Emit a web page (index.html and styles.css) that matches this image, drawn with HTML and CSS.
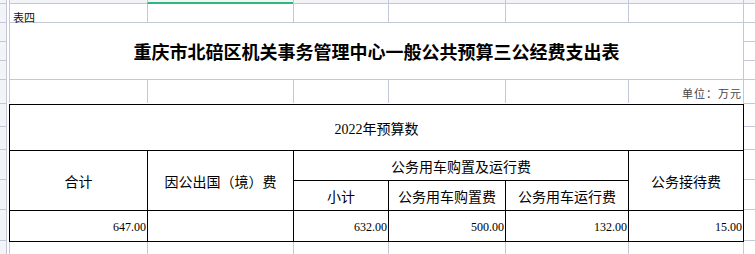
FILE: index.html
```html
<!DOCTYPE html>
<html lang="zh-CN">
<head>
<meta charset="utf-8">
<title>三公经费支出表</title>
<link rel="stylesheet" href="styles.css">
</head>
<body>
<div class="app">
  <div class="rowhdr">
    <div class="rh h3"></div>
    <div class="rh h18"></div>
    <div class="rh h18"></div>
    <div class="rh h18"></div>
    <div class="rh h18"></div>
    <div class="rh h23"></div>
    <div class="rh h22"></div>
    <div class="rh h22"></div>
    <div class="rh h29"></div>
    <div class="rh h29"></div>
    <div class="rh h30"></div>
    <div class="rh h20"></div>
  </div>
  <div class="sheet">
    <div class="grid7 colhdr">
      <div class="cell"></div><div class="cell sel"></div><div class="cell"></div><div class="cell"></div><div class="cell"></div><div class="cell"></div><div class="cell"></div>
    </div>
    <div class="grid7 r1">
      <div class="cell label">表四</div><div class="cell"></div><div class="cell"></div><div class="cell"></div><div class="cell"></div><div class="cell"></div><div class="cell"></div>
    </div>
    <div class="title-row">
      <div class="title">重庆市北碚区机关事务管理中心一般公共预算三公经费支出表</div>
      <div class="gcol">
        <div class="g h18"></div><div class="g h18"></div><div class="g h18"></div>
      </div>
    </div>
    <div class="grid7 unit-row">
      <div class="cell"></div><div class="cell"></div><div class="cell"></div><div class="cell"></div><div class="cell"></div><div class="cell unit">单位：万元</div><div class="cell gl"></div>
    </div>
    <div class="table-row">
      <div class="tbl">
        <div class="tc year">2022年预算数</div>
        <div class="tc hd total">合计</div>
        <div class="tc hd abroad">因公出国（境）费</div>
        <div class="tc hd car">公务用车购置及运行费</div>
        <div class="tc hd recep">公务接待费</div>
        <div class="tc hd">小计</div>
        <div class="tc hd">公务用车购置费</div>
        <div class="tc hd">公务用车运行费</div>
        <div class="tc num">647.00</div>
        <div class="tc num"></div>
        <div class="tc num">632.00</div>
        <div class="tc num">500.00</div>
        <div class="tc num">132.00</div>
        <div class="tc num">15.00</div>
      </div>
      <div class="gcol">
        <div class="g h22"></div><div class="g h22"></div><div class="g h29"></div><div class="g h29"></div><div class="g h30"></div>
      </div>
    </div>
    <div class="grid7 tail">
      <div class="cell"></div><div class="cell"></div><div class="cell"></div><div class="cell"></div><div class="cell"></div><div class="cell"></div><div class="cell"></div>
    </div>
  </div>
</div>
</body>
</html>
```

FILE: styles.css
```css
* { box-sizing: border-box; }
html, body {
  margin: 0;
  padding: 0;
  background: #ffffff;
  overflow: hidden;
}
body {
  width: 755px;
  height: 254px;
  font-family: "Liberation Serif", "Noto Sans CJK SC", serif;
  color: #000;
}
.app {
  display: flex;
  align-items: flex-start;
}
.rowhdr {
  width: 7px;
  margin-right: 2px;
  display: flex;
  flex-direction: column;
  background: #f2f4f7;
  border-right: 1px solid #c3c8d6;
}
.rh { border-bottom: 1px solid #c3c8d6; }
.h3 { height: 4px; }
.h18 { height: 19px; }
.h20 { height: 21px; }
.h22 { height: 23px; }
.h23 { height: 24px; }
.h29 { height: 30px; }
.h30 { height: 31px; }

.sheet {
  width: 746px;
  display: flex;
  flex-direction: column;
}
.grid7 {
  display: grid;
  grid-template-columns: 138px 146px 95px 117px 123px 115px 12px;
}
.cell {
  border-left: 1px solid #c3c8d6;
  border-bottom: 1px solid #c3c8d6;
}
.colhdr .cell {
  height: 4px;
  background: #f2f3f6;
}
.colhdr .cell.sel {
  border-bottom: 2px solid #2fb77f;
}
.r1 .cell { height: 19px; }
.r1 .label {
  font-family: "Noto Sans CJK SC", sans-serif;
  font-size: 11px;
  line-height: 11px;
  padding: 8px 0 0 3px;
  color: #111;
}
.title-row {
  display: flex;
}
.title {
  width: 734px;
  height: 57px;
  border-left: 1px solid #c3c8d6;
  border-bottom: 1px solid #c3c8d6;
  display: flex;
  align-items: center;
  justify-content: center;
  font-family: "Noto Sans CJK SC", sans-serif;
  font-weight: 700;
  font-size: 18px;
  color: #000;
  padding-bottom: 1px;
}
.gcol {
  flex: 1;
  display: flex;
  flex-direction: column;
  border-left: 1px solid #c3c8d6;
}
.table-row .gcol { border-left: none; }
.g { border-bottom: 1px solid #c3c8d6; }

.unit-row .cell {
  height: 23px;
  border-bottom: none;
}
.unit-row .cell.gl {
  height: 24px;
  border-bottom: 1px solid #c3c8d6;
}
.unit {
  display: flex;
  align-items: center;
  justify-content: flex-end;
  padding: 3px 1px 0 0;
  font-family: "Noto Sans CJK SC", sans-serif;
  font-size: 11px;
  letter-spacing: 1px;
  color: #444;
}

.table-row {
  display: flex;
}
.tbl {
  width: 735px;
  display: grid;
  grid-template-columns: 137px 145px 94px 116px 122px 114px;
  grid-template-rows: 45px 29px 29px 30px;
  gap: 1px;
  background: #000;
  border: 1px solid #000;
}
.tc {
  background: #fff;
  display: flex;
  align-items: center;
  justify-content: center;
  font-size: 14px;
  letter-spacing: 0;
}
.year { grid-column: 1 / 7; padding-top: 1px; }
.total { grid-column: 1; grid-row: 2 / 4; }
.abroad { grid-column: 2; grid-row: 2 / 4; }
.car { grid-column: 3 / 6; grid-row: 2; }
.recep { grid-column: 6; grid-row: 2 / 4; }
.hd {
  font-family: "Noto Sans CJK SC", sans-serif;
  padding-top: 1px;
}
.num {
  justify-content: flex-end;
  font-size: 12px;
  padding: 2px 1px 0 0;
}
.tail .cell {
  height: 21px;
}
```
